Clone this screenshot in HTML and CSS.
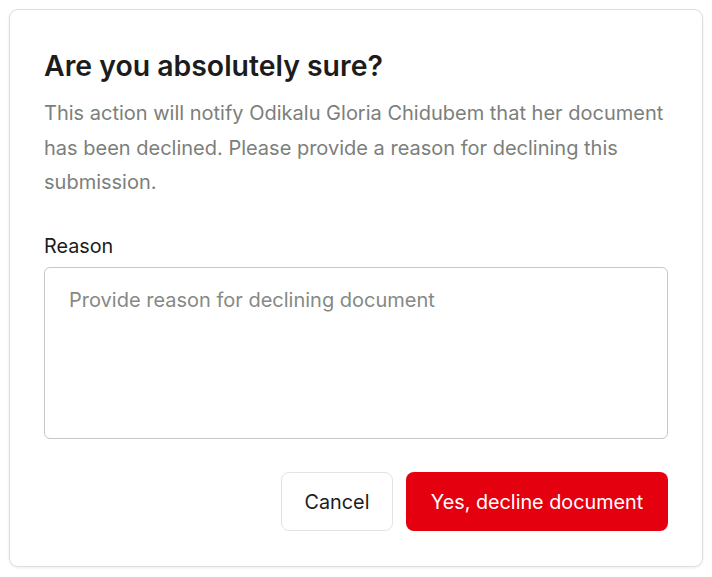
FILE: index.html
```html
<!DOCTYPE html>
<html>
<head>
<meta charset="utf-8">
<link rel="stylesheet" href="styles.css">
</head>
<body>
<div class="card">
  <h2 class="title">Are you absolutely sure?</h2>
  <p class="desc">This action will notify Odikalu Gloria Chidubem that her document has been declined. Please provide a reason for declining this submission.</p>
  <label class="label" for="reason">Reason</label>
  <textarea id="reason" class="field" placeholder="Provide reason for declining document"></textarea>
  <div class="actions">
    <button class="btn btn-cancel">Cancel</button>
    <button class="btn btn-danger">Yes, decline document</button>
  </div>
</div>
</body>
</html>
```
FILE: styles.css
```css
* { box-sizing: border-box; }
html, body { margin: 0; padding: 0; background: #ffffff; }
body {
  font-family: Inter, "Noto Sans", sans-serif;
  padding: 9px;
}
.card {
  width: 694px;
  height: 558px;
  border: 1px solid #dedede;
  border-radius: 9px;
  box-shadow: 0 1px 3px rgba(0,0,0,0.08);
  padding: 38px 34px 35px 34px;
  display: flex;
  flex-direction: column;
}
.title {
  margin: 0;
  font-size: 28.4px;
  line-height: 36px;
  font-weight: 600;
  color: #1c1c1c;
}
.desc {
  margin: 12px 0 0 0;
  font-size: 20px;
  line-height: 34.5px;
  color: #7b807c;
}
.label {
  margin-top: 34px;
  font-size: 19.8px;
  line-height: 24px;
  color: #1c1c1c;
}
.field {
  margin-top: 9px;
  height: 173px;
  width: 100%;
  resize: none;
  border: 1px solid #c8c8c8;
  border-radius: 6px;
  padding: 20px 24px;
  font-family: inherit;
  font-size: 20px;
  line-height: 24px;
  color: #1c1c1c;
}
.field::placeholder { color: #858a86; }
.actions {
  margin-top: 33px;
  display: flex;
  justify-content: flex-end;
  gap: 13px;
}
.btn {
  height: 59px;
  border-radius: 8px;
  font-family: inherit;
  font-size: 19.8px;
  padding: 0;
  cursor: pointer;
}
.btn-cancel {
  width: 112px;
  background: #ffffff;
  border: 1px solid #e3e3e3;
  color: #1c1c1c;
}
.btn-danger {
  width: 262px;
  background: #e5000f;
  border: none;
  color: #ffffff;
}
```
